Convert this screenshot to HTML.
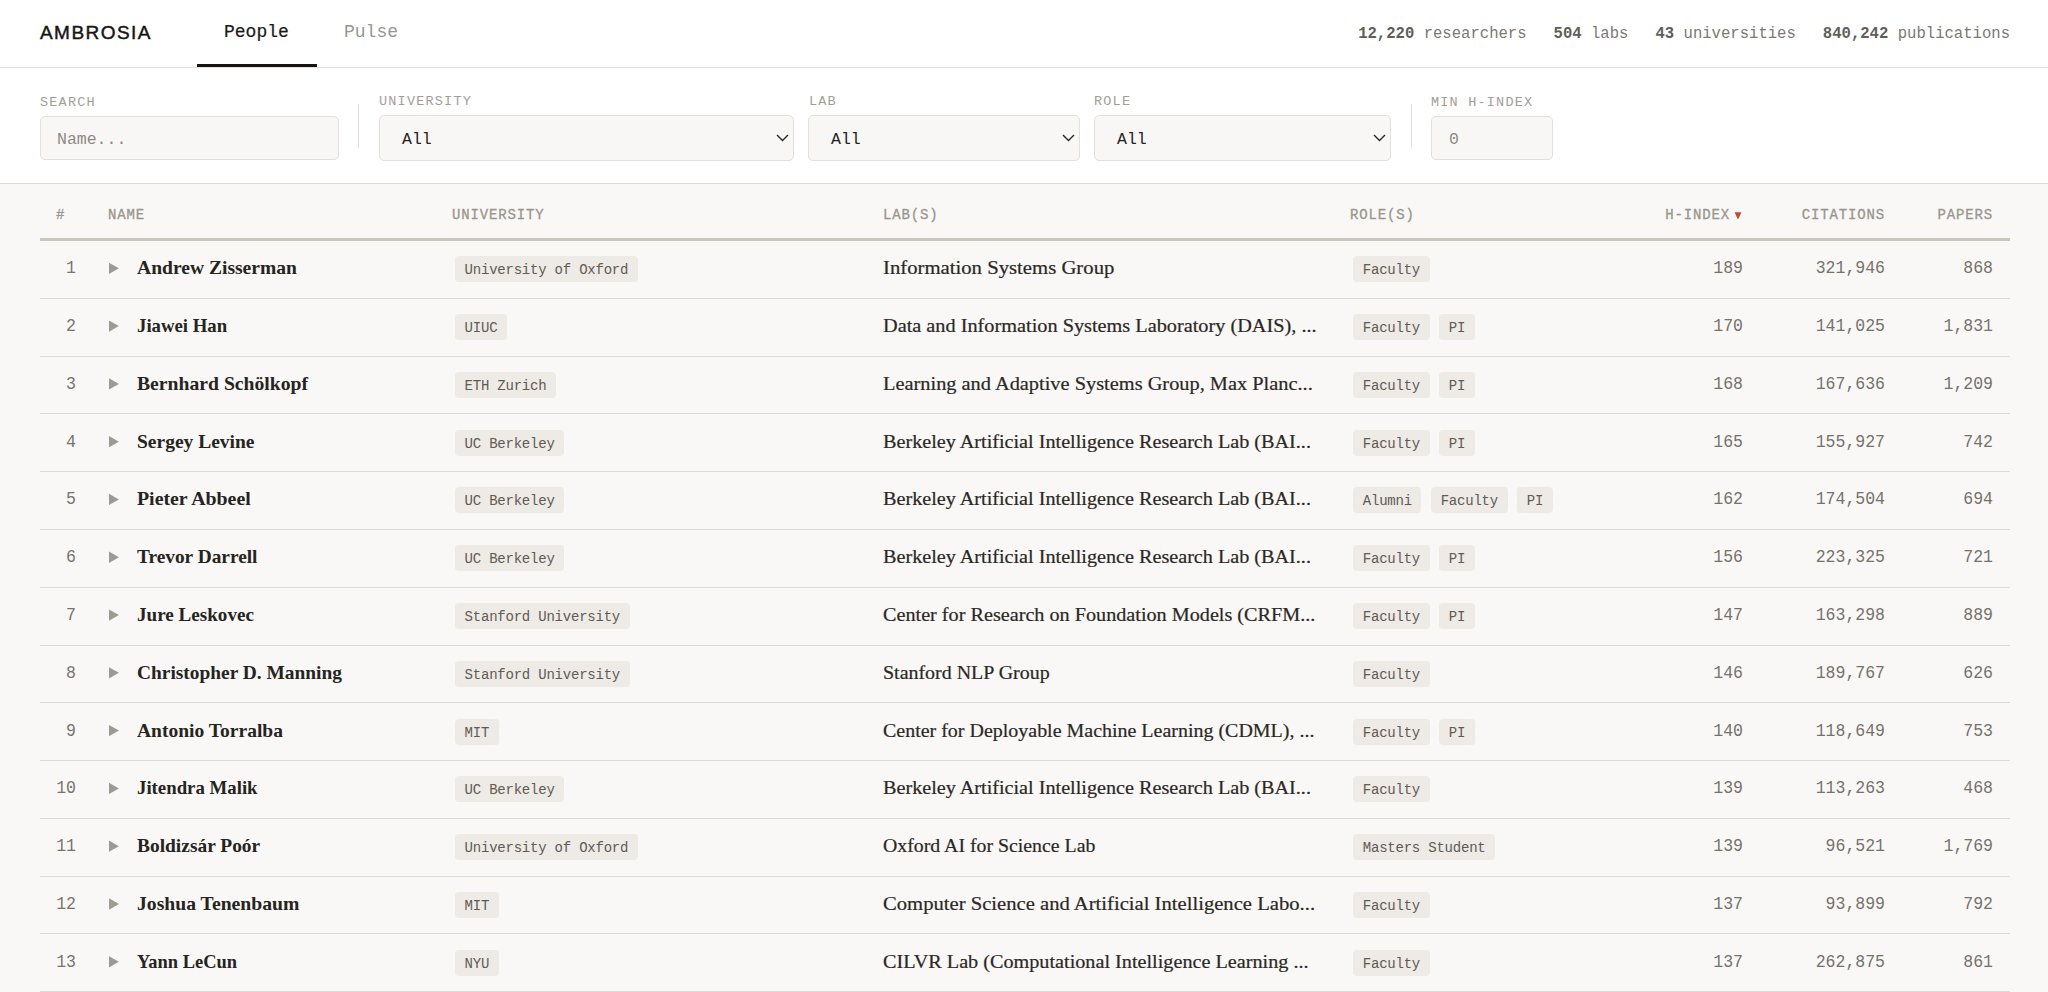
<!DOCTYPE html><html><head><meta charset="utf-8"><title>Ambrosia</title><style>
*{box-sizing:border-box;margin:0;padding:0}
html,body{width:2048px;height:992px;overflow:hidden;background:#f9f8f6}
body{position:relative;font-family:"Liberation Mono",monospace;color:#2a2723}
.abs{position:absolute;white-space:nowrap}
#hdr{position:absolute;left:0;top:0;width:2048px;height:68px;background:#ffffff;border-bottom:1px solid #e4e1dc}
#logo{left:40px;top:21px;font-family:"Liberation Sans",sans-serif;font-size:19px;letter-spacing:1.45px;color:#161513;line-height:24px;-webkit-text-stroke:0.45px #161513}
.nav{top:20px;font-size:18px;line-height:24px}
#people{left:224px;color:#1b1a18;-webkit-text-stroke:0.2px #1b1a18}
#pulse{left:344px;color:#9a9690}
#uline{left:197px;top:64px;width:120px;height:3px;background:#151412}
#stats{right:38px;top:22.5px;font-size:15.6px;line-height:22px;color:#7c7872}
#stats b{color:#615d57;font-weight:bold}
#stats span.g{margin-left:27px}
#filters{position:absolute;left:0;top:68px;width:2048px;height:116px;background:#ffffff;border-bottom:1px solid #dedbd4}
.flab{font-size:13.5px;letter-spacing:1.2px;color:#a29e97;line-height:16px}
.box{position:absolute;background:#f8f7f5;border:1.5px solid #e3e0db;border-radius:5px}
.btxt{font-size:16.5px;line-height:20px}
.sep{position:absolute;width:1px;background:#e2dfda}
.chev{position:absolute}
.th{top:207px;font-size:14px;font-weight:normal;-webkit-text-stroke:0.3px #9a958e;letter-spacing:0.85px;color:#9a958e;line-height:16px}
#hline{position:absolute;left:40px;top:238px;width:1970px;height:3px;background:#cac6bc}
.rline{position:absolute;left:40px;width:1970px;height:1px;background:#dedad4}
.num{font-size:16.5px;transform-origin:100% 55%;transform:scaleY(1.1);color:#77736d;line-height:20px}
.tri{position:absolute;width:0;height:0;border-top:5.65px solid transparent;border-bottom:5.65px solid transparent;border-left:10px solid #9e9991}
.name{font-family:"Liberation Serif",serif;font-weight:bold;font-size:19.5px;color:#262421;line-height:22px}
.lab{font-family:"Liberation Serif",serif;font-size:18px;-webkit-text-stroke:0.2px #2b2825;transform-origin:0 0;transform:scaleX(1.055);color:#2b2825;line-height:22px}
.tags{position:absolute;display:flex;gap:9.6px}.tag{position:absolute}.tag,.tg{display:block;height:26px;background:#eeeae5;border-radius:4px;font-size:14px;letter-spacing:-0.22px;line-height:29px;color:#5f5a54;padding:0 9.6px;white-space:nowrap}
.val{font-size:16.5px;transform-origin:100% 55%;transform:scaleY(1.1);color:#75716b;line-height:20px;text-align:right}
</style></head><body>
<div id="hdr"></div>
<div class="abs" id="logo">AMBROSIA</div>
<div class="abs nav" id="people">People</div>
<div class="abs nav" id="pulse">Pulse</div>
<div class="abs" id="uline"></div>
<div class="abs" id="stats"><b>12,220</b> researchers<span class="g"><b>504</b> labs</span><span class="g"><b>43</b> universities</span><span class="g"><b>840,242</b> publications</span></div>
<div id="filters"></div>
<div class="abs flab" style="left:40px;top:95px">SEARCH</div>
<div class="box" style="left:40px;top:116px;width:299px;height:44px"></div>
<div class="abs btxt" style="left:57px;top:130px;color:#8d8983">Name...</div>
<div class="sep" style="left:358px;top:104px;height:44px"></div>
<div class="abs flab" style="left:379px;top:94px">UNIVERSITY</div>
<div class="box" style="left:379px;top:115px;width:415px;height:46px"></div>
<div class="abs btxt" style="left:402px;top:130px;color:#24221f">All</div>
<svg class="chev" style="left:776px;top:134px" width="13" height="8" viewBox="0 0 13 8"><path d="M1 1 L6.5 6.5 L12 1" fill="none" stroke="#2a2723" stroke-width="1.4"/></svg>
<div class="abs flab" style="left:809px;top:94px">LAB</div>
<div class="box" style="left:808px;top:115px;width:272px;height:46px"></div>
<div class="abs btxt" style="left:831px;top:130px;color:#24221f">All</div>
<svg class="chev" style="left:1062px;top:134px" width="13" height="8" viewBox="0 0 13 8"><path d="M1 1 L6.5 6.5 L12 1" fill="none" stroke="#2a2723" stroke-width="1.4"/></svg>
<div class="abs flab" style="left:1094px;top:94px">ROLE</div>
<div class="box" style="left:1094px;top:115px;width:297px;height:46px"></div>
<div class="abs btxt" style="left:1117px;top:130px;color:#24221f">All</div>
<svg class="chev" style="left:1373px;top:134px" width="13" height="8" viewBox="0 0 13 8"><path d="M1 1 L6.5 6.5 L12 1" fill="none" stroke="#2a2723" stroke-width="1.4"/></svg>
<div class="sep" style="left:1411px;top:104px;height:44px"></div>
<div class="abs flab" style="left:1431px;top:95px">MIN H-INDEX</div>
<div class="box" style="left:1431px;top:116px;width:122px;height:44px"></div>
<div class="abs btxt" style="left:1449px;top:130px;color:#8d8983">0</div>
<div class="abs th" style="left:56px">#</div>
<div class="abs th" style="left:108px">NAME</div>
<div class="abs th" style="left:452px">UNIVERSITY</div>
<div class="abs th" style="left:883px">LAB(S)</div>
<div class="abs th" style="left:1350px">ROLE(S)</div>
<div class="abs th" style="right:306px">H-INDEX<svg width="8" height="9" viewBox="0 0 8 9" style="margin-left:4px;vertical-align:-1px"><path d="M0.5 1.2 H7.5 L4 8.4 Z" fill="#c24a2c"/></svg></div>
<div class="abs th" style="right:163px">CITATIONS</div>
<div class="abs th" style="right:55px">PAPERS</div>
<div id="hline"></div>
<div class="rline" style="top:297.80px"></div>
<div class="abs num" style="right:1972px;top:259.30px;text-align:right">1</div>
<svg class="abs" style="left:109px;top:262px" width="11" height="14" viewBox="0 0 11 14"><path d="M0 0.65 L9.9 6.30 L0 11.95 Z" fill="#9e9991"/></svg>
<div class="abs name" style="left:137px;top:257.30px;transform-origin:0 0;transform:scaleX(1.0031)">Andrew Zisserman</div>
<div class="tag" style="left:455px;top:256.30px">University of Oxford</div>
<div class="abs lab" style="left:883px;top:257.30px;transform:scaleX(1.1511)">Information Systems Group</div>
<div class="tags" style="left:1353.2px;top:256.30px"><span class="tg">Faculty</span></div>
<div class="abs val" style="right:305px;top:259.30px">189</div>
<div class="abs val" style="right:163px;top:259.30px">321,946</div>
<div class="abs val" style="right:55px;top:259.30px">868</div>
<div class="rline" style="top:355.59px"></div>
<div class="abs num" style="right:1972px;top:317.09px;text-align:right">2</div>
<svg class="abs" style="left:109px;top:320px" width="11" height="14" viewBox="0 0 11 14"><path d="M0 0.44 L9.9 6.09 L0 11.74 Z" fill="#9e9991"/></svg>
<div class="abs name" style="left:137px;top:315.09px;transform-origin:0 0;transform:scaleX(0.9617)">Jiawei Han</div>
<div class="tag" style="left:455px;top:314.09px">UIUC</div>
<div class="abs lab" style="left:883px;top:315.09px;transform:scaleX(1.1266)">Data and Information Systems Laboratory (DAIS), ...</div>
<div class="tags" style="left:1353.2px;top:314.09px"><span class="tg">Faculty</span><span class="tg">PI</span></div>
<div class="abs val" style="right:305px;top:317.09px">170</div>
<div class="abs val" style="right:163px;top:317.09px">141,025</div>
<div class="abs val" style="right:55px;top:317.09px">1,831</div>
<div class="rline" style="top:413.38px"></div>
<div class="abs num" style="right:1972px;top:374.88px;text-align:right">3</div>
<svg class="abs" style="left:109px;top:378px" width="11" height="14" viewBox="0 0 11 14"><path d="M0 0.23 L9.9 5.88 L0 11.53 Z" fill="#9e9991"/></svg>
<div class="abs name" style="left:137px;top:372.88px;transform-origin:0 0;transform:scaleX(1.0088)">Bernhard Schölkopf</div>
<div class="tag" style="left:455px;top:371.88px">ETH Zurich</div>
<div class="abs lab" style="left:883px;top:372.88px;transform:scaleX(1.1312)">Learning and Adaptive Systems Group, Max Planc...</div>
<div class="tags" style="left:1353.2px;top:371.88px"><span class="tg">Faculty</span><span class="tg">PI</span></div>
<div class="abs val" style="right:305px;top:374.88px">168</div>
<div class="abs val" style="right:163px;top:374.88px">167,636</div>
<div class="abs val" style="right:55px;top:374.88px">1,209</div>
<div class="rline" style="top:471.17px"></div>
<div class="abs num" style="right:1972px;top:432.67px;text-align:right">4</div>
<svg class="abs" style="left:109px;top:436px" width="11" height="14" viewBox="0 0 11 14"><path d="M0 0.02 L9.9 5.67 L0 11.32 Z" fill="#9e9991"/></svg>
<div class="abs name" style="left:137px;top:430.67px;transform-origin:0 0;transform:scaleX(1.0000)">Sergey Levine</div>
<div class="tag" style="left:455px;top:429.67px">UC Berkeley</div>
<div class="abs lab" style="left:883px;top:430.67px;transform:scaleX(1.1207)">Berkeley Artificial Intelligence Research Lab (BAI...</div>
<div class="tags" style="left:1353.2px;top:429.67px"><span class="tg">Faculty</span><span class="tg">PI</span></div>
<div class="abs val" style="right:305px;top:432.67px">165</div>
<div class="abs val" style="right:163px;top:432.67px">155,927</div>
<div class="abs val" style="right:55px;top:432.67px">742</div>
<div class="rline" style="top:528.96px"></div>
<div class="abs num" style="right:1972px;top:490.46px;text-align:right">5</div>
<svg class="abs" style="left:109px;top:493px" width="11" height="14" viewBox="0 0 11 14"><path d="M0 0.81 L9.9 6.46 L0 12.11 Z" fill="#9e9991"/></svg>
<div class="abs name" style="left:137px;top:488.46px;transform-origin:0 0;transform:scaleX(1.0179)">Pieter Abbeel</div>
<div class="tag" style="left:455px;top:487.46px">UC Berkeley</div>
<div class="abs lab" style="left:883px;top:488.46px;transform:scaleX(1.1207)">Berkeley Artificial Intelligence Research Lab (BAI...</div>
<div class="tags" style="left:1353.2px;top:487.46px"><span class="tg">Alumni</span><span class="tg">Faculty</span><span class="tg">PI</span></div>
<div class="abs val" style="right:305px;top:490.46px">162</div>
<div class="abs val" style="right:163px;top:490.46px">174,504</div>
<div class="abs val" style="right:55px;top:490.46px">694</div>
<div class="rline" style="top:586.75px"></div>
<div class="abs num" style="right:1972px;top:548.25px;text-align:right">6</div>
<svg class="abs" style="left:109px;top:551px" width="11" height="14" viewBox="0 0 11 14"><path d="M0 0.60 L9.9 6.25 L0 11.90 Z" fill="#9e9991"/></svg>
<div class="abs name" style="left:137px;top:546.25px;transform-origin:0 0;transform:scaleX(0.9918)">Trevor Darrell</div>
<div class="tag" style="left:455px;top:545.25px">UC Berkeley</div>
<div class="abs lab" style="left:883px;top:546.25px;transform:scaleX(1.1207)">Berkeley Artificial Intelligence Research Lab (BAI...</div>
<div class="tags" style="left:1353.2px;top:545.25px"><span class="tg">Faculty</span><span class="tg">PI</span></div>
<div class="abs val" style="right:305px;top:548.25px">156</div>
<div class="abs val" style="right:163px;top:548.25px">223,325</div>
<div class="abs val" style="right:55px;top:548.25px">721</div>
<div class="rline" style="top:644.54px"></div>
<div class="abs num" style="right:1972px;top:606.04px;text-align:right">7</div>
<svg class="abs" style="left:109px;top:609px" width="11" height="14" viewBox="0 0 11 14"><path d="M0 0.39 L9.9 6.04 L0 11.69 Z" fill="#9e9991"/></svg>
<div class="abs name" style="left:137px;top:604.04px;transform-origin:0 0;transform:scaleX(0.9798)">Jure Leskovec</div>
<div class="tag" style="left:455px;top:603.04px">Stanford University</div>
<div class="abs lab" style="left:883px;top:604.04px;transform:scaleX(1.1216)">Center for Research on Foundation Models (CRFM...</div>
<div class="tags" style="left:1353.2px;top:603.04px"><span class="tg">Faculty</span><span class="tg">PI</span></div>
<div class="abs val" style="right:305px;top:606.04px">147</div>
<div class="abs val" style="right:163px;top:606.04px">163,298</div>
<div class="abs val" style="right:55px;top:606.04px">889</div>
<div class="rline" style="top:702.33px"></div>
<div class="abs num" style="right:1972px;top:663.83px;text-align:right">8</div>
<svg class="abs" style="left:109px;top:667px" width="11" height="14" viewBox="0 0 11 14"><path d="M0 0.18 L9.9 5.83 L0 11.48 Z" fill="#9e9991"/></svg>
<div class="abs name" style="left:137px;top:661.83px;transform-origin:0 0;transform:scaleX(0.9947)">Christopher D. Manning</div>
<div class="tag" style="left:455px;top:660.83px">Stanford University</div>
<div class="abs lab" style="left:883px;top:661.83px;transform:scaleX(1.1086)">Stanford NLP Group</div>
<div class="tags" style="left:1353.2px;top:660.83px"><span class="tg">Faculty</span></div>
<div class="abs val" style="right:305px;top:663.83px">146</div>
<div class="abs val" style="right:163px;top:663.83px">189,767</div>
<div class="abs val" style="right:55px;top:663.83px">626</div>
<div class="rline" style="top:760.12px"></div>
<div class="abs num" style="right:1972px;top:721.62px;text-align:right">9</div>
<svg class="abs" style="left:109px;top:724px" width="11" height="14" viewBox="0 0 11 14"><path d="M0 0.97 L9.9 6.62 L0 12.27 Z" fill="#9e9991"/></svg>
<div class="abs name" style="left:137px;top:719.62px;transform-origin:0 0;transform:scaleX(1.0014)">Antonio Torralba</div>
<div class="tag" style="left:455px;top:718.62px">MIT</div>
<div class="abs lab" style="left:883px;top:719.62px;transform:scaleX(1.1093)">Center for Deployable Machine Learning (CDML), ...</div>
<div class="tags" style="left:1353.2px;top:718.62px"><span class="tg">Faculty</span><span class="tg">PI</span></div>
<div class="abs val" style="right:305px;top:721.62px">140</div>
<div class="abs val" style="right:163px;top:721.62px">118,649</div>
<div class="abs val" style="right:55px;top:721.62px">753</div>
<div class="rline" style="top:817.91px"></div>
<div class="abs num" style="right:1972px;top:779.41px;text-align:right">10</div>
<svg class="abs" style="left:109px;top:782px" width="11" height="14" viewBox="0 0 11 14"><path d="M0 0.76 L9.9 6.41 L0 12.06 Z" fill="#9e9991"/></svg>
<div class="abs name" style="left:137px;top:777.41px;transform-origin:0 0;transform:scaleX(0.9635)">Jitendra Malik</div>
<div class="tag" style="left:455px;top:776.41px">UC Berkeley</div>
<div class="abs lab" style="left:883px;top:777.41px;transform:scaleX(1.1207)">Berkeley Artificial Intelligence Research Lab (BAI...</div>
<div class="tags" style="left:1353.2px;top:776.41px"><span class="tg">Faculty</span></div>
<div class="abs val" style="right:305px;top:779.41px">139</div>
<div class="abs val" style="right:163px;top:779.41px">113,263</div>
<div class="abs val" style="right:55px;top:779.41px">468</div>
<div class="rline" style="top:875.70px"></div>
<div class="abs num" style="right:1972px;top:837.20px;text-align:right">11</div>
<svg class="abs" style="left:109px;top:840px" width="11" height="14" viewBox="0 0 11 14"><path d="M0 0.55 L9.9 6.20 L0 11.85 Z" fill="#9e9991"/></svg>
<div class="abs name" style="left:137px;top:835.20px;transform-origin:0 0;transform:scaleX(0.9960)">Boldizsár Poór</div>
<div class="tag" style="left:455px;top:834.20px">University of Oxford</div>
<div class="abs lab" style="left:883px;top:835.20px;transform:scaleX(1.1007)">Oxford AI for Science Lab</div>
<div class="tags" style="left:1353.2px;top:834.20px"><span class="tg">Masters Student</span></div>
<div class="abs val" style="right:305px;top:837.20px">139</div>
<div class="abs val" style="right:163px;top:837.20px">96,521</div>
<div class="abs val" style="right:55px;top:837.20px">1,769</div>
<div class="rline" style="top:933.49px"></div>
<div class="abs num" style="right:1972px;top:894.99px;text-align:right">12</div>
<svg class="abs" style="left:109px;top:898px" width="11" height="14" viewBox="0 0 11 14"><path d="M0 0.34 L9.9 5.99 L0 11.64 Z" fill="#9e9991"/></svg>
<div class="abs name" style="left:137px;top:892.99px;transform-origin:0 0;transform:scaleX(1.0087)">Joshua Tenenbaum</div>
<div class="tag" style="left:455px;top:891.99px">MIT</div>
<div class="abs lab" style="left:883px;top:892.99px;transform:scaleX(1.1464)">Computer Science and Artificial Intelligence Labo...</div>
<div class="tags" style="left:1353.2px;top:891.99px"><span class="tg">Faculty</span></div>
<div class="abs val" style="right:305px;top:894.99px">137</div>
<div class="abs val" style="right:163px;top:894.99px">93,899</div>
<div class="abs val" style="right:55px;top:894.99px">792</div>
<div class="rline" style="top:991.28px"></div>
<div class="abs num" style="right:1972px;top:952.78px;text-align:right">13</div>
<svg class="abs" style="left:109px;top:956px" width="11" height="14" viewBox="0 0 11 14"><path d="M0 0.13 L9.9 5.78 L0 11.43 Z" fill="#9e9991"/></svg>
<div class="abs name" style="left:137px;top:950.78px;transform-origin:0 0;transform:scaleX(0.9472)">Yann LeCun</div>
<div class="tag" style="left:455px;top:949.78px">NYU</div>
<div class="abs lab" style="left:883px;top:950.78px;transform:scaleX(1.1222)">CILVR Lab (Computational Intelligence Learning ...</div>
<div class="tags" style="left:1353.2px;top:949.78px"><span class="tg">Faculty</span></div>
<div class="abs val" style="right:305px;top:952.78px">137</div>
<div class="abs val" style="right:163px;top:952.78px">262,875</div>
<div class="abs val" style="right:55px;top:952.78px">861</div>
</body></html>
